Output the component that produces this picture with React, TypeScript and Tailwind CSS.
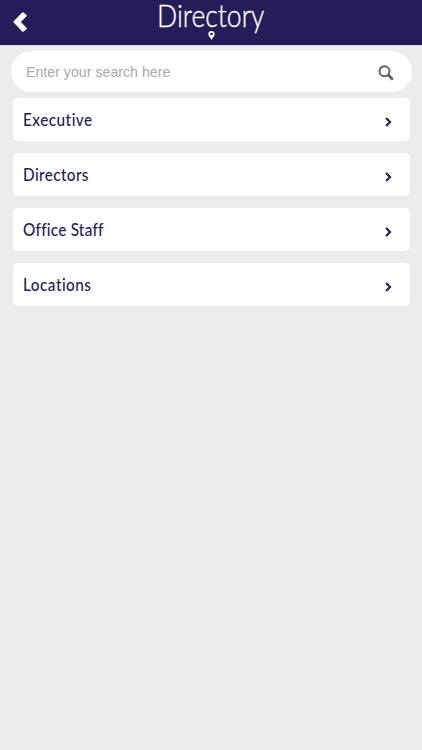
const items = [
  { label: 'Executive', text: 'tracking-[0.5px]' },
  { label: 'Directors', text: 'tracking-[0.4px]' },
  { label: 'Office Staff', text: 'tracking-[0.25px]' },
  { label: 'Locations', text: 'tracking-[0.5px]' },
];

export default function App() {
  return (
    <div className="flex h-[750px] w-full flex-col bg-[#ececec] font-['Lato',sans-serif]">
      <header className="grid h-[46px] shrink-0 grid-cols-[60px_1fr_60px] border-b border-[#d9d4f0] bg-[#251c5a]">
        <button aria-label="Back" className="flex items-start pt-3 pl-[13px]">
          <svg width="15" height="20" viewBox="0 0 15 20" fill="white">
            <path d="M9.2.6a1 1 0 0 1 1.4 0l2.9 2.3a1 1 0 0 1 0 1.4L7.8 9.9l5.7 5.8a1 1 0 0 1 0 1.4l-2.9 2.5a1 1 0 0 1-1.4 0L.7 10.6a1 1 0 0 1 0-1.4Z" />
          </svg>
        </button>
        <div className="flex flex-col items-center">
          <h1 className="mb-px h-[30px] origin-center scale-x-[0.83] text-[32px] leading-[30px] font-light whitespace-nowrap text-white [-webkit-text-stroke:0.35px_white]">
            Directory
          </h1>
          <svg width="7" height="9" viewBox="0 0 7 9" fill="white">
            <path fillRule="evenodd" d="M3.5 0a3.2 3.2 0 0 0-3.2 3.1c0 1.7 1.9 3.5 3.2 5.9 1.3-2.4 3.2-4.2 3.2-5.9A3.2 3.2 0 0 0 3.5 0Zm0 1.7a1.3 1.3 0 1 1 0 2.6 1.3 1.3 0 0 1 0-2.6Z" />
          </svg>
        </div>
      </header>
      <main className="flex flex-col pt-[5px]">
        <label className="mx-[10.5px] flex h-[41px] items-center justify-between rounded-full bg-white pr-[17.5px] pl-[15.5px]">
          <span className="pt-0.5 font-['Liberation_Sans',sans-serif] text-[14.2px] text-[#aaaaaa]">Enter your search here</span>
          <svg width="16" height="16" viewBox="0 0 16 16" fill="none" stroke="#606060" className="mt-[3px]">
            <circle cx="6.5" cy="6.3" r="5" strokeWidth="1.9" />
            <path d="m10.3 10 3.7 3.8" strokeWidth="2.8" strokeLinecap="round" />
          </svg>
        </label>
        <nav className="mx-[12.5px] mt-1.5 flex flex-col gap-3">
          {items.map((item) => (
            <button key={item.label} className="flex h-[43px] items-center justify-between rounded-[5px] bg-white pr-[18px] pl-[10.5px] text-left">
              <span className={`origin-left scale-x-[0.93] pt-px text-[16.5px] leading-5 font-medium text-[#251c5a] ${item.text}`}>{item.label}</span>
              <svg width="7" height="10" viewBox="0 0 7 10" fill="none" className="mt-[5px]">
                <path d="m1.1 1 3.9 4-3.9 4" stroke="#251c5a" strokeWidth="2.2" />
              </svg>
            </button>
          ))}
        </nav>
      </main>
    </div>
  );
}
